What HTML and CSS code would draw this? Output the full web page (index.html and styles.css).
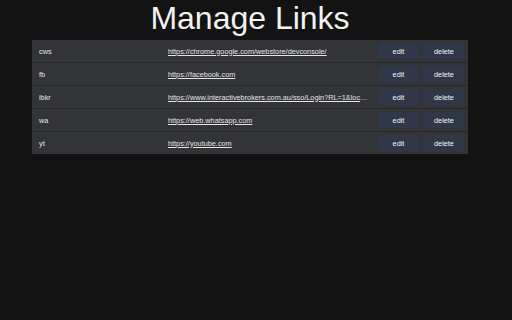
FILE: index.html
```html
<!DOCTYPE html>
<html>
<head>
<meta charset="utf-8">
<link rel="stylesheet" href="styles.css">
</head>
<body>
<div class="page">
  <h1 class="title">Manage Links</h1>
  <div class="links">
    <div class="row">
      <div class="name">cws</div>
      <div class="url"><a href="#">https://chrome.google.com/webstore/devconsole/</a></div>
      <div class="actions"><button class="btn">edit</button><button class="btn">delete</button></div>
    </div>
    <div class="row">
      <div class="name">fb</div>
      <div class="url"><a href="#">https://facebook.com</a></div>
      <div class="actions"><button class="btn">edit</button><button class="btn">delete</button></div>
    </div>
    <div class="row">
      <div class="name">ibkr</div>
      <div class="url"><a href="#">https://www.interactivebrokers.com.au/sso/Login?RL=1&amp;loc=AU&amp;action=ACCT_MGMT_MAIN</a></div>
      <div class="actions"><button class="btn">edit</button><button class="btn">delete</button></div>
    </div>
    <div class="row">
      <div class="name">wa</div>
      <div class="url"><a href="#">https://web.whatsapp.com</a></div>
      <div class="actions"><button class="btn">edit</button><button class="btn">delete</button></div>
    </div>
    <div class="row">
      <div class="name">yt</div>
      <div class="url"><a href="#">https://youtube.com</a></div>
      <div class="actions"><button class="btn">edit</button><button class="btn">delete</button></div>
    </div>
  </div>
</div>
</body>
</html>
```
FILE: styles.css
```css
html, body {
  margin: 0;
  padding: 0;
  background: #131313;
  font-family: "Liberation Sans", Arial, sans-serif;
  color: #e6e6e6;
}
.page {
  width: 500px;
}
.title {
  margin: 0 0 3px;
  font-size: 32px;
  line-height: 37px;
  font-weight: normal;
  text-align: center;
  color: #f2f2f2;
}
.links {
  margin: 0 32px;
  background: #333438;
  display: flex;
  flex-direction: column;
}
.row {
  display: grid;
  grid-template-columns: 136px 1fr auto;
  align-items: center;
  height: 22px;
  font-size: 7.3px;
}
.row + .row {
  border-top: 1px solid #27282b;
}
.name {
  padding-left: 7px;
  color: #e4e4e4;
}
.url {
  overflow: hidden;
  white-space: nowrap;
  text-overflow: ellipsis;
  padding-right: 8px;
  color: #e4e4e4;
}
.url a {
  color: #e4e4e4;
  text-decoration: underline;
}
.actions {
  display: flex;
  gap: 4px;
  padding-right: 3px;
}
.btn {
  height: 16px;
  border: none;
  border-radius: 3px;
  background: #2f3748;
  color: #f4f4f4;
  font-family: "Liberation Sans", Arial, sans-serif;
  font-size: 7.3px;
  padding: 0;
  width: 41px;
}
.btn + .btn {
  width: 42px;
}
```
